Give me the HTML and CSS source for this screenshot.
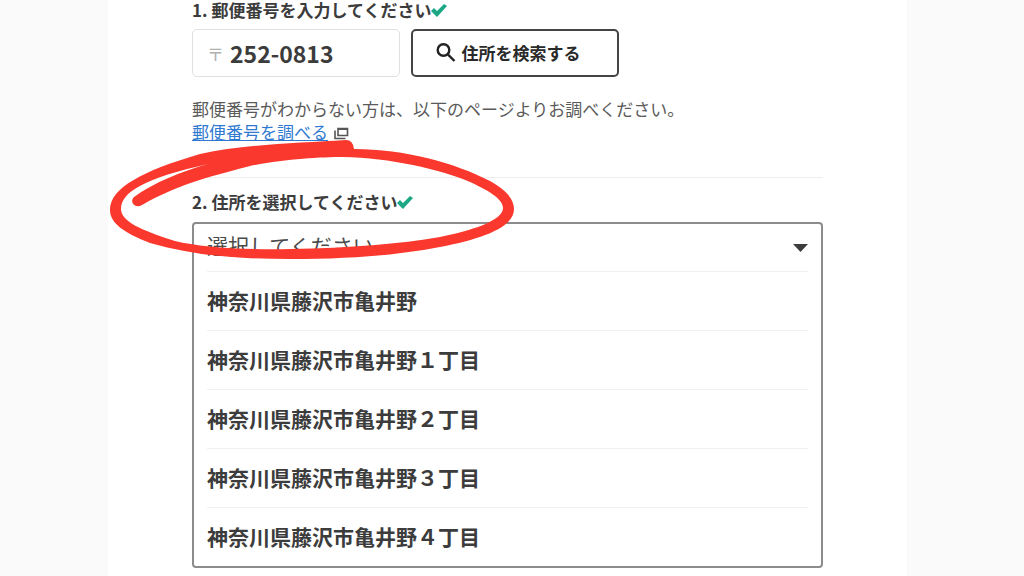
FILE: index.html
```html
<!DOCTYPE html>
<html lang="ja">
<head>
<meta charset="utf-8">
<meta name="viewport" content="width=device-width, initial-scale=1">
<title>住所の入力</title>
<link rel="stylesheet" href="styles.css">
</head>
<body>
<main class="sheet">
  <section class="step">
    <label class="step-title" for="zip">1. 郵便番号を入力してください<svg class="check" viewBox="0 0 16 14" aria-hidden="true"><path d="M0 8l3-3 3 3 7-7 3 2-10 11z"/></svg></label>
    <div class="zip-row">
      <div class="zip-field">
        <span class="zip-mark">〒</span>
        <input class="zip-input" id="zip" type="text" value="252-0813">
      </div>
      <button class="search-button" type="button">
        <svg class="search-icon" viewBox="0 0 20 20" aria-hidden="true"><circle cx="7.5" cy="8" r="5.8"/><path d="M11.8 12.3l6.7 6.7"/></svg>
        住所を検索する
      </button>
    </div>
    <p class="help">郵便番号がわからない方は、以下のページよりお調べください。<br><a class="help-link" href="#">郵便番号を調べる</a><svg class="window-icon" viewBox="0 0 15 13" aria-hidden="true"><path d="M4 1.5h9.5v7H4zM4 2.2h9.5M1 3.5v8h10.5"/></svg></p>
  </section>

  <section class="step step-address">
    <label class="step-title" for="address">2. 住所を選択してください<svg class="check" viewBox="0 0 16 14" aria-hidden="true"><path d="M0 8l3-3 3 3 7-7 3 2-10 11z"/></svg></label>
    <div class="picker">
      <div class="picker-head">
        <select class="picker-select" id="address">
          <option>選択してください</option>
        </select>
        <svg class="caret" viewBox="0 0 15 8" aria-hidden="true"><path d="M0 0h15L7.5 8z"/></svg>
      </div>
      <ul class="options">
        <li class="option-item"><button class="option" type="button">神奈川県藤沢市亀井野</button></li>
        <li class="option-item"><button class="option" type="button">神奈川県藤沢市亀井野１丁目</button></li>
        <li class="option-item"><button class="option" type="button">神奈川県藤沢市亀井野２丁目</button></li>
        <li class="option-item"><button class="option" type="button">神奈川県藤沢市亀井野３丁目</button></li>
        <li class="option-item"><button class="option" type="button">神奈川県藤沢市亀井野４丁目</button></li>
      </ul>
    </div>
    <svg class="marker" viewBox="108 137 408 124" aria-hidden="true">
      <path fill-rule="evenodd" d="M110 210C110 188 142 171 200 154C245 144 300 143 346 140Q353 140 354 149C405 149 455 163 490 181C506 190 514 199 514 209C514 226 487 238 440 247C393 256 345 259 290 259C240 259 195 256 150 243C124 233 110 223 110 210ZM142 205C180 183 220 174 250 166C285 159 320 157 343 157C390 158 440 169 470 182C492 192 503 200 503 208C503 221 470 231 440 237C400 244 350 248 290 249C240 250 200 247 175 241C140 230 121 221 121 209C121 192 145 178 208 164C180 172 155 182 134 197C129 202 135 209 142 205Z"/>
    </svg>
  </section>
</main>
</body>
</html>
```

FILE: styles.css
```css
* {
  box-sizing: border-box;
}

body {
  margin: 0;
  padding: 0 117px 0 108px;
  background: #fafafa;
  color: #3c3c3c;
  font-family: "Noto Sans CJK JP", sans-serif;
  font-size: 17px;
}

.sheet {
  min-height: 100vh;
  padding: 0 84px 8px;
  background: #fff;
}

.step {
  display: flex;
  flex-direction: column;
  gap: 9px;
}

.step-address {
  position: relative;
  gap: 10px;
  margin-top: 34px;
  padding-top: 14px;
  border-top: 1px solid #eee;
}

.step-title {
  display: flex;
  align-items: center;
  font-weight: 700;
  line-height: 20px;
}

.check {
  width: 16px;
  height: 14px;
  fill: #1ba784;
}

.zip-row {
  display: flex;
  gap: 11px;
}

.zip-field,
.search-button {
  display: flex;
  align-items: center;
  width: 208px;
  height: 48px;
  border-radius: 5px;
}

.zip-field {
  gap: 6px;
  padding: 0 14px;
  border: 1px solid #e0e0e0;
}

.zip-mark {
  color: #b0b0b0;
}

.zip-input {
  width: 100%;
  min-width: 0;
  padding: 0;
  border: 0;
  background: none;
  color: inherit;
  font: 700 23px "Noto Sans CJK JP", sans-serif;
}

.search-button {
  justify-content: center;
  gap: 6px;
  padding: 0 14px 2px 0;
  border: 2px solid #444;
  background: #fff;
  color: #2a2a2a;
  font: 700 17px "Noto Sans CJK JP", sans-serif;
}

.search-icon {
  width: 20px;
  height: 20px;
  fill: none;
  stroke: #222;
  stroke-width: 2.4;
}

.help {
  margin: 11px 0 0;
  color: #5a5a5a;
  line-height: 23px;
}

.help-link {
  color: #3079d0;
}

.window-icon {
  width: 15px;
  height: 13px;
  margin-left: 6px;
  vertical-align: -1px;
  fill: none;
  stroke: #555;
  stroke-width: 1.6;
}

.picker {
  padding: 0 13px;
  border: 2px solid #8c8c8c;
  border-radius: 4px;
}

.picker-head {
  display: flex;
  align-items: center;
  height: 47px;
}

.picker-select {
  flex: 1;
  padding: 0 0 6px;
  border: 0;
  appearance: none;
  background: none;
  color: #4a4a4a;
  font: 400 21px "Noto Sans CJK JP", sans-serif;
}

.caret {
  width: 15px;
  height: 8px;
  fill: #3c3c3c;
}

.options {
  margin: 0;
  padding: 0;
  list-style: none;
}

.option-item {
  border-top: 1px solid #f0f0f0;
}

.option {
  display: block;
  width: 100%;
  height: 58px;
  padding: 0 0 2px;
  border: 0;
  background: none;
  color: inherit;
  font: 700 21px "Noto Sans CJK JP", sans-serif;
  text-align: left;
}

.marker {
  position: absolute;
  top: -41px;
  left: -84px;
  width: 408px;
  height: 124px;
  fill: #fb382e;
  pointer-events: none;
}
```
